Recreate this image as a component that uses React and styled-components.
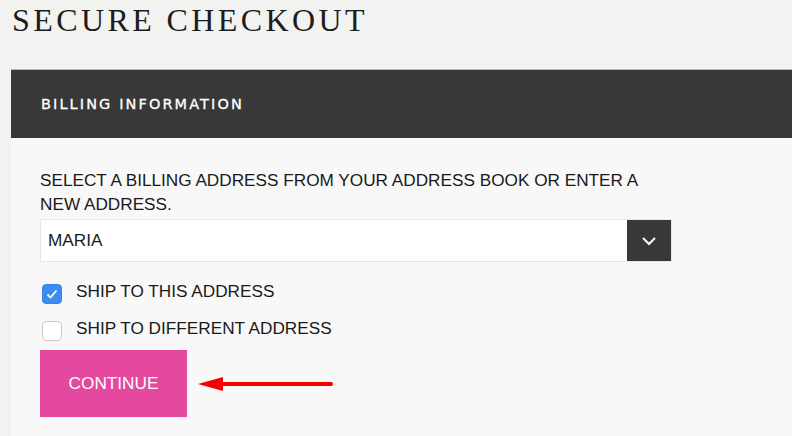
import styled, { createGlobalStyle } from "styled-components";

const Global = createGlobalStyle`
  html, body {
    margin: 0;
    padding: 0;
    background: #f2f2f0;
    overflow: hidden;
  }
  * { box-sizing: border-box; }
`;

const Page = styled.div`
  width: 792px;
  height: 436px;
  padding-left: 11px;
  background: #f2f2f0;
`;

const Title = styled.h1`
  margin: 0;
  height: 69px;
  padding: 2px 0 0 1px;
  font-family: "Liberation Serif", serif;
  font-weight: normal;
  font-size: 32px;
  letter-spacing: 3.4px;
  color: #1c1c1c;
`;

const Panel = styled.section`
  background: #f8f8f8;
  height: 367px;
`;

const PanelHead = styled.div`
  height: 69px;
  background: #383838;
  border-top: 1px solid #b8b8b8;
  display: flex;
  align-items: center;
  padding: 0 0 1px 30px;
  font-family: "DejaVu Sans", sans-serif;
  font-size: 14.5px;
  letter-spacing: 2.1px;
  color: #fff;
  -webkit-text-stroke: 0.3px #fff;
`;

const Body = styled.div`
  padding: 30px 0 0 29px;
  width: 661px;
  font-family: "Liberation Sans", Arial, sans-serif;
  color: #1a1a1a;
`;

const Label = styled.p`
  margin: 0;
  font-size: 17.2px;
  line-height: 24px;
`;

const Select = styled.div`
  margin-top: 3px;
  height: 43px;
  display: flex;
  background: #fff;
  border: 1px solid #e6e6e6;
`;

const SelectValue = styled.div`
  flex: 1;
  display: flex;
  align-items: center;
  padding-left: 7px;
  font-size: 17.2px;
`;

const SelectButton = styled.div`
  width: 44px;
  background: #383838;
  display: flex;
  align-items: center;
  justify-content: center;
`;

const Options = styled.div`
  margin-top: 21px;
  display: flex;
  flex-direction: column;
  gap: 16px;
`;

const Option = styled.label`
  display: flex;
  align-items: center;
  gap: 14px;
  padding-left: 2px;
  font-size: 17.2px;
  height: 21px;
`;

const OptionText = styled.span`
  padding-bottom: 5px;
`;

const Box = styled.span`
  width: 20px;
  height: 20px;
  border-radius: 4px;
  display: flex;
  align-items: center;
  justify-content: center;
  background: ${(p) => (p.checked ? "#3b8df2" : "#fff")};
  border: 1px solid ${(p) => (p.checked ? "#3583e6" : "#c9c9c9")};
`;

const Actions = styled.div`
  margin-top: 9px;
  display: flex;
  align-items: center;
  gap: 10px;
`;

const Button = styled.button`
  width: 147px;
  height: 67px;
  border: none;
  background: #e5489f;
  color: #fff;
  font-family: "Liberation Sans", Arial, sans-serif;
  font-size: 17.2px;
  padding: 0;
`;

const Chevron = () => (
  <svg width="16" height="10" viewBox="0 0 16 10">
    <path d="M2 2l6 6 6-6" fill="none" stroke="#fff" strokeWidth="2" />
  </svg>
);

const Check = () => (
  <svg width="12" height="10" viewBox="0 0 12 10">
    <path d="M1.5 5.5l3 3 6-7" fill="none" stroke="#fff" strokeWidth="1.8" />
  </svg>
);

const Arrow = () => (
  <svg width="138" height="16" viewBox="0 0 138 16">
    <path d="M26 8h108" stroke="#f40000" strokeWidth="4" strokeLinecap="round" />
    <path d="M1 8L26 1v14z" fill="#f40000" />
  </svg>
);

export default function App() {
  return (
    <Page>
      <Global />
      <Title>SECURE CHECKOUT</Title>
      <Panel>
        <PanelHead>BILLING INFORMATION</PanelHead>
        <Body>
          <Label>
            SELECT A BILLING ADDRESS FROM YOUR ADDRESS BOOK OR ENTER A NEW
            ADDRESS.
          </Label>
          <Select>
            <SelectValue>MARIA</SelectValue>
            <SelectButton>
              <Chevron />
            </SelectButton>
          </Select>
          <Options>
            <Option>
              <Box checked>
                <Check />
              </Box>
              <OptionText>SHIP TO THIS ADDRESS</OptionText>
            </Option>
            <Option>
              <Box />
              <OptionText>SHIP TO DIFFERENT ADDRESS</OptionText>
            </Option>
          </Options>
          <Actions>
            <Button>CONTINUE</Button>
            <Arrow />
          </Actions>
        </Body>
      </Panel>
    </Page>
  );
}
